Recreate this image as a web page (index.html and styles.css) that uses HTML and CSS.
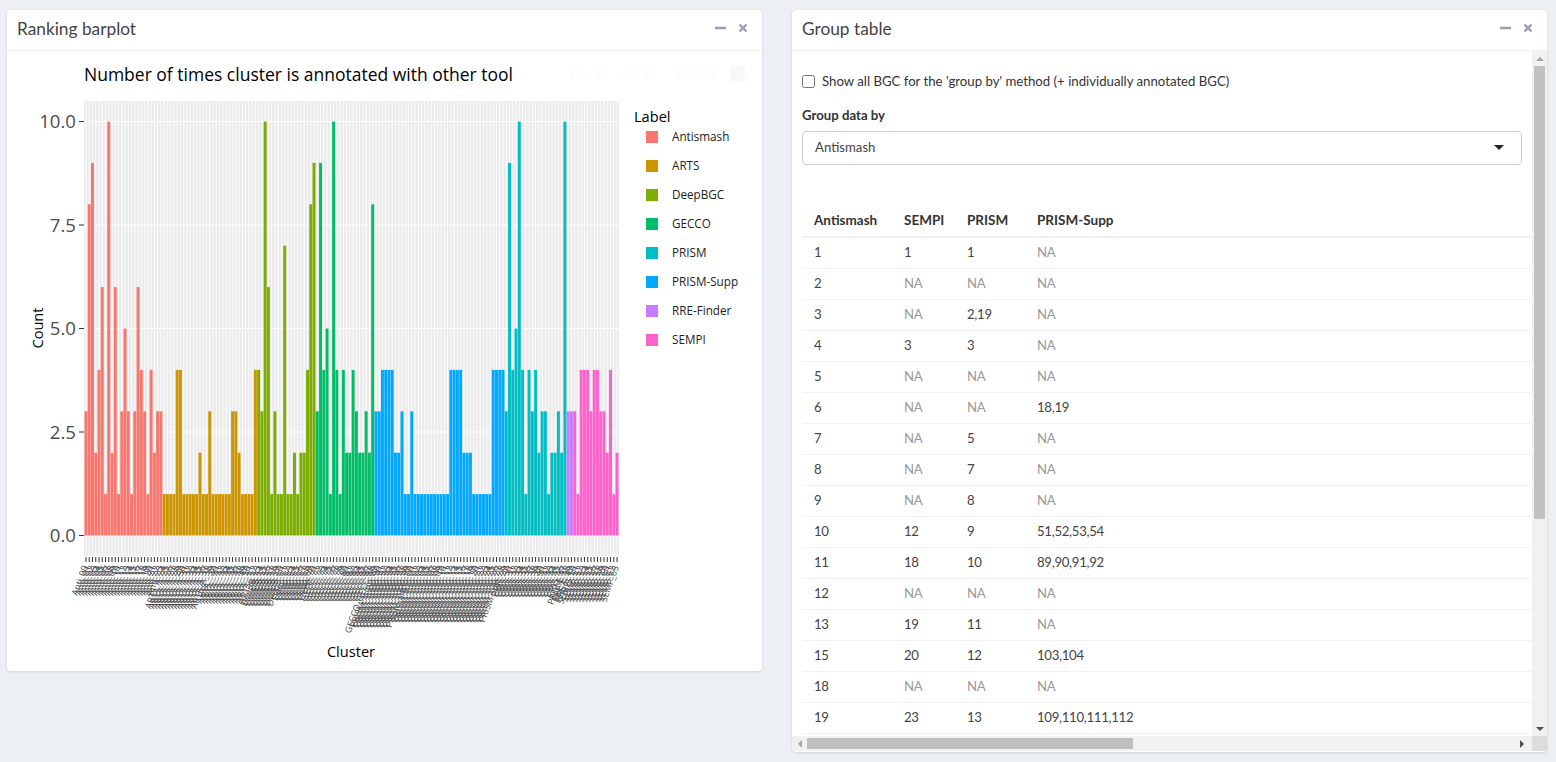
FILE: index.html
```html
<!DOCTYPE html>
<html lang="en">
<head>
  <meta charset="UTF-8" />
  <title>Ranking barplot</title>
  <link rel="stylesheet" href="styles.css">
</head>
<body>
  <div class="card card-plot">
    <div class="card-header">
      <h3>Ranking barplot</h3>
      <div class="card-tools">
        <svg class="tool" width="11" height="10" viewBox="0 0 11 10"><path d="M0 5h11" /></svg>
        <svg class="tool" width="10" height="10" viewBox="0 0 10 10"><path d="M1.5 1.5l7 7M8.5 1.5l-7 7" /></svg>
      </div>
    </div>
    <!-- filled in by plot.js, viewBox uses page coordinates -->
    <svg id="barplot" class="barplot" width="755" height="620" viewBox="7 51 755 620"></svg>
  </div>

  <div class="card card-table">
    <div class="card-header">
      <h3>Group table</h3>
      <div class="card-tools">
        <svg class="tool" width="11" height="10" viewBox="0 0 11 10"><path d="M0 5h11" /></svg>
        <svg class="tool" width="10" height="10" viewBox="0 0 10 10"><path d="M1.5 1.5l7 7M8.5 1.5l-7 7" /></svg>
      </div>
    </div>
    <div class="scroll-frame">
      <div class="scroll-content">
        <label class="check-row">
          <input type="checkbox" />
          <span>Show all BGC for the 'group by' method (+ individually annotated BGC)</span>
        </label>
        <div class="field-label">Group data by</div>
        <div class="select-box">
          <span>Antismash</span>
          <i class="caret"></i>
        </div>
        <table class="group-table">
          <thead>
            <tr><th class="col-a">Antismash</th><th class="col-b">SEMPI</th><th class="col-c">PRISM</th><th>PRISM-Supp</th></tr>
          </thead>
          <tbody>
            <tr><td>1</td><td>1</td><td>1</td><td class="na">NA</td></tr>
            <tr><td>2</td><td class="na">NA</td><td class="na">NA</td><td class="na">NA</td></tr>
            <tr><td>3</td><td class="na">NA</td><td>2,19</td><td class="na">NA</td></tr>
            <tr><td>4</td><td>3</td><td>3</td><td class="na">NA</td></tr>
            <tr><td>5</td><td class="na">NA</td><td class="na">NA</td><td class="na">NA</td></tr>
            <tr><td>6</td><td class="na">NA</td><td class="na">NA</td><td>18,19</td></tr>
            <tr><td>7</td><td class="na">NA</td><td>5</td><td class="na">NA</td></tr>
            <tr><td>8</td><td class="na">NA</td><td>7</td><td class="na">NA</td></tr>
            <tr><td>9</td><td class="na">NA</td><td>8</td><td class="na">NA</td></tr>
            <tr><td>10</td><td>12</td><td>9</td><td>51,52,53,54</td></tr>
            <tr><td>11</td><td>18</td><td>10</td><td>89,90,91,92</td></tr>
            <tr><td>12</td><td class="na">NA</td><td class="na">NA</td><td class="na">NA</td></tr>
            <tr><td>13</td><td>19</td><td>11</td><td class="na">NA</td></tr>
            <tr><td>15</td><td>20</td><td>12</td><td>103,104</td></tr>
            <tr><td>18</td><td class="na">NA</td><td class="na">NA</td><td class="na">NA</td></tr>
            <tr><td>19</td><td>23</td><td>13</td><td>109,110,111,112</td></tr>
          </tbody>
        </table>
      </div>
      <div class="vbar">
        <i class="arrow arrow-up"></i>
        <div class="vthumb"></div>
        <i class="arrow arrow-down"></i>
      </div>
      <div class="hbar">
        <i class="arrow arrow-left"></i>
        <div class="hthumb"></div>
        <i class="arrow arrow-right"></i>
      </div>
      <div class="corner"></div>
    </div>
  </div>

  <script src="plot.js"></script>
</body>
</html>
```

FILE: styles.css
```css
* {
  box-sizing: border-box;
  margin: 0;
  padding: 0;
}

html,
body {
  height: 100%;
  overflow: hidden;
}

body {
  background: #ecf0f5;
  color: #333;
  font-family: "Lato", "Noto Sans", sans-serif;
  font-size: 13.2px;
  display: flex;
  align-items: flex-start;
  gap: 30px;
  padding: 10px 0 0 7px;
}

.card {
  background: #fff;
  width: 755px;
  border-radius: 4px;
  box-shadow: 0 0 1px rgba(0, 0, 0, 0.13), 0 1px 3px rgba(0, 0, 0, 0.1);
  overflow: hidden;
}

.card-plot {
  height: 661px;
}

.card-table {
  height: 742px;
}

.card-header {
  height: 41px;
  padding: 0 10px 4px;
  border-bottom: 1px solid #f1f1f1;
  display: flex;
  align-items: center;
  justify-content: space-between;
}

.card-header h3 {
  font-size: 17.3px;
  font-weight: 400;
  color: #444;
}

.card-tools {
  display: flex;
  align-items: center;
  gap: 12px;
  padding-right: 4px;
}

.tool path {
  fill: none;
  stroke: #97a0b3;
  stroke-width: 2.4;
}

.barplot {
  display: block;
}

.barplot text {
  font-family: "Open Sans", "Noto Sans", sans-serif;
}

.plot-title {
  font-size: 17.5px;
  fill: #000;
}

.axis-title {
  font-size: 14.6px;
  fill: #000;
}

.y-tick {
  font-size: 18.6px;
  fill: #4d4d4d;
}

.x-tick {
  font-size: 9px;
  fill: #444;
}

.legend-title {
  font-size: 14.6px;
  fill: #000;
}

.legend-item {
  font-size: 11.7px;
  fill: #222;
}

/* fake scrollbars, so the frame looks the same with scrollbars hidden */
.scroll-frame {
  height: 701px;
  display: grid;
  grid-template-columns: 740px 15px;
  grid-template-rows: 685px 15px 1px;
}

.scroll-content {
  overflow: hidden;
  padding: 23px 0 0 10px;
}

.check-row {
  display: flex;
  align-items: center;
  gap: 7px;
  height: 14px;
}

.check-row input {
  width: 13px;
  height: 13px;
  margin: 0;
}

.field-label {
  margin-top: 17px;
  font-weight: 700;
  line-height: 20px;
}

.select-box {
  margin-top: 6px;
  width: 720px;
  height: 34px;
  padding: 0 17px 2px 12px;
  border: 1px solid #ccc;
  border-radius: 4px;
  display: flex;
  align-items: center;
  justify-content: space-between;
  color: #444;
}

.caret {
  border-style: solid;
  border-width: 5px 5px 0;
  border-color: #222 transparent transparent;
}

.group-table {
  margin-top: 39px;
  width: 800px;
  table-layout: fixed;
  border-collapse: collapse;
}

.group-table th {
  height: 33px;
  padding: 0 12px 1px;
  text-align: left;
  font-size: 13.5px;
  font-weight: 700;
  border-bottom: 2px solid #f0f0f0;
}

.group-table td {
  height: 31px;
  padding: 0 12px 1px;
  letter-spacing: -0.3px;
  color: #444;
  border-bottom: 1px solid #f2f2f2;
}

.col-a {
  width: 90px;
}

.col-b {
  width: 63px;
}

.col-c {
  width: 70px;
}

.group-table .na {
  color: #999;
}

.vbar {
  background: #f1f1f1;
  display: flex;
  flex-direction: column;
  align-items: center;
  padding: 6px 0 5px;
}

.vthumb {
  width: 11px;
  height: 453px;
  margin-top: 5px;
  background: #c1c1c1;
}

.hbar {
  background: #f1f1f1;
  display: flex;
  align-items: center;
  padding: 0 6px;
}

.hthumb {
  width: 326px;
  height: 11px;
  margin-left: 5px;
  background: #bfbfbf;
}

.corner {
  background: #dcdcdc;
}

.arrow {
  display: block;
  border-style: solid;
  border-color: transparent;
  flex: none;
}

.arrow-up {
  border-width: 0 4px 4px;
  border-bottom-color: #a3a3a3;
}

.arrow-down {
  margin-top: auto;
  border-width: 4px 4px 0;
  border-top-color: #505050;
}

.arrow-left {
  border-width: 4px 4px 4px 0;
  border-right-color: #a3a3a3;
}

.arrow-right {
  margin-left: auto;
  margin-right: 2px;
  border-width: 4px 0 4px 4px;
  border-left-color: #505050;
}
```

FILE: plot.js
```js
// Count per cluster, in plot order
const groups = [
  { name: "Antismash", color: "#F8766D", counts: [3,8,9,2,4,6,1,10,2,6,1,3,5,3,1,3,6,4,3,1,4,2,3,3] },
  { name: "ARTS", color: "#CD9600", counts: [1,1,1,1,4,4,1,1,1,1,1,2,1,1,3,1,1,1,1,1,1,3,3,2,1,1,1,1,4] },
  { name: "DeepBGC", color: "#7CAE00", counts: [4,3,10,6,1,3,1,1,7,1,1,2,1,2,2,4,8,9] },
  { name: "GECCO", color: "#00BE67", counts: [3,9,4,5,1,10,4,1,4,2,2,4,3,2,2,3,2,8] },
  { name: "PRISM-Supp", color: "#00A9FF", counts: [3,3,4,4,4,4,2,2,3,1,1,3,1,1,1,1,1,1,1,1,1,1,1,4,4,4,4,2,2,2,1,1,1,1,1,1,4,4,4,4] },
  { name: "PRISM", color: "#00BFC4", counts: [3,9,4,5,10,4,1,4,3,4,2,3,3,1,2,2,3,2,10] },
  { name: "RRE-Finder", color: "#C77CFF", counts: [3,3] },
  { name: "SEMPI", color: "#FF61CC", counts: [3,1,4,4,4,3,4,4,3,3,2,4,1,2] }
];

const legendOrder = ["Antismash", "ARTS", "DeepBGC", "GECCO", "PRISM", "PRISM-Supp", "RRE-Finder", "SEMPI"];

const svg = document.getElementById("barplot");
const panelLeft = 84, panelRight = 619, panelTop = 101, panelBottom = 556;
const zero = 535.5, perCount = 41.4;
const total = groups.reduce((n, g) => n + g.counts.length, 0);
const step = (panelRight - panelLeft) / (total + 0.2);

function add(tag, attrs, text) {
  const el = document.createElementNS("http://www.w3.org/2000/svg", tag);
  for (const key in attrs) el.setAttribute(key, attrs[key]);
  if (text !== undefined) el.textContent = text;
  svg.appendChild(el);
  return el;
}

function centre(i) {
  return panelLeft + (i + 0.6) * step;
}

// Panel and grid
add("rect", { x: panelLeft, y: panelTop, width: panelRight - panelLeft, height: panelBottom - panelTop, fill: "#EBEBEB" });
for (let i = 0; i < total; i++) {
  add("rect", { x: centre(i) - 0.4, y: panelTop, width: 0.8, height: panelBottom - panelTop, fill: "#fff" });
}
[0, 2.5, 5, 7.5, 10].forEach(v => {
  const y = zero - v * perCount;
  add("rect", { x: panelLeft, y: y - 0.5, width: panelRight - panelLeft, height: 1, fill: "#fff" });
  add("rect", { x: 79, y: y - 0.5, width: 5, height: 1, fill: "#333" });
  add("text", { x: 76, y: y + 6.5, "text-anchor": "end", class: "y-tick" }, v.toFixed(1));
});

// Bars and x axis labels
let index = 0;
groups.forEach(g => {
  g.counts.forEach(c => {
    const x = centre(index);
    add("rect", {
      x: x - step * 0.45,
      y: zero - c * perCount,
      width: step * 0.9,
      height: c * perCount,
      fill: g.color
    });
    add("rect", { x: x - 0.5, y: 557, width: 1, height: 5, fill: "#333" });

    const chars = Math.round(labelLength(index) / 5.3);
    const head = (g.name + "_" + g.name).slice(0, chars - 3);
    const tail = "_" + String(index % 100).padStart(2, "0");
    add("text", {
      x: x + 2,
      y: 567,
      "text-anchor": "end",
      class: "x-tick",
      transform: `rotate(-70 ${x + 2} 567)`
    }, head + tail);
    index++;
  });
});

// Length of the x labels in px, by stretch of the axis
function labelLength(i) {
  if (i < 24) return 38;
  if (i < 39) return 50;
  if (i < 62) return 43;
  if (i < 88) return 36;
  if (i < 101) return 68;
  if (i < 129) return 63;
  if (i < 147) return 36;
  if (i < 151) return 42;
  return 36;
}

// Titles
add("text", { x: 84, y: 81, class: "plot-title" }, "Number of times cluster is annotated with other tool");
add("text", { x: 351, y: 657, "text-anchor": "middle", class: "axis-title" }, "Cluster");
add("text", { x: 43, y: 328, "text-anchor": "middle", class: "axis-title", transform: "rotate(-90 43 328)" }, "Count");

// Legend
add("text", { x: 634, y: 122, class: "legend-title" }, "Label");
legendOrder.forEach((name, i) => {
  const g = groups.find(item => item.name === name);
  const y = 137 + i * 29;
  add("rect", { x: 646, y: y - 6, width: 12, height: 12, fill: g.color });
  add("text", { x: 672, y: y + 4, class: "legend-item" }, name);
});

// Plotly modebar, almost invisible until hover
[[570, 15], [597, 11], [623, 11], [645, 11], [677, 13], [702, 13]].forEach(([x, w]) => {
  add("rect", { x: x, y: 69, width: w, height: 11, fill: "#fdfdfd" });
});
add("rect", { x: 730, y: 66, width: 15, height: 16, fill: "#f8f8f8" });
```
